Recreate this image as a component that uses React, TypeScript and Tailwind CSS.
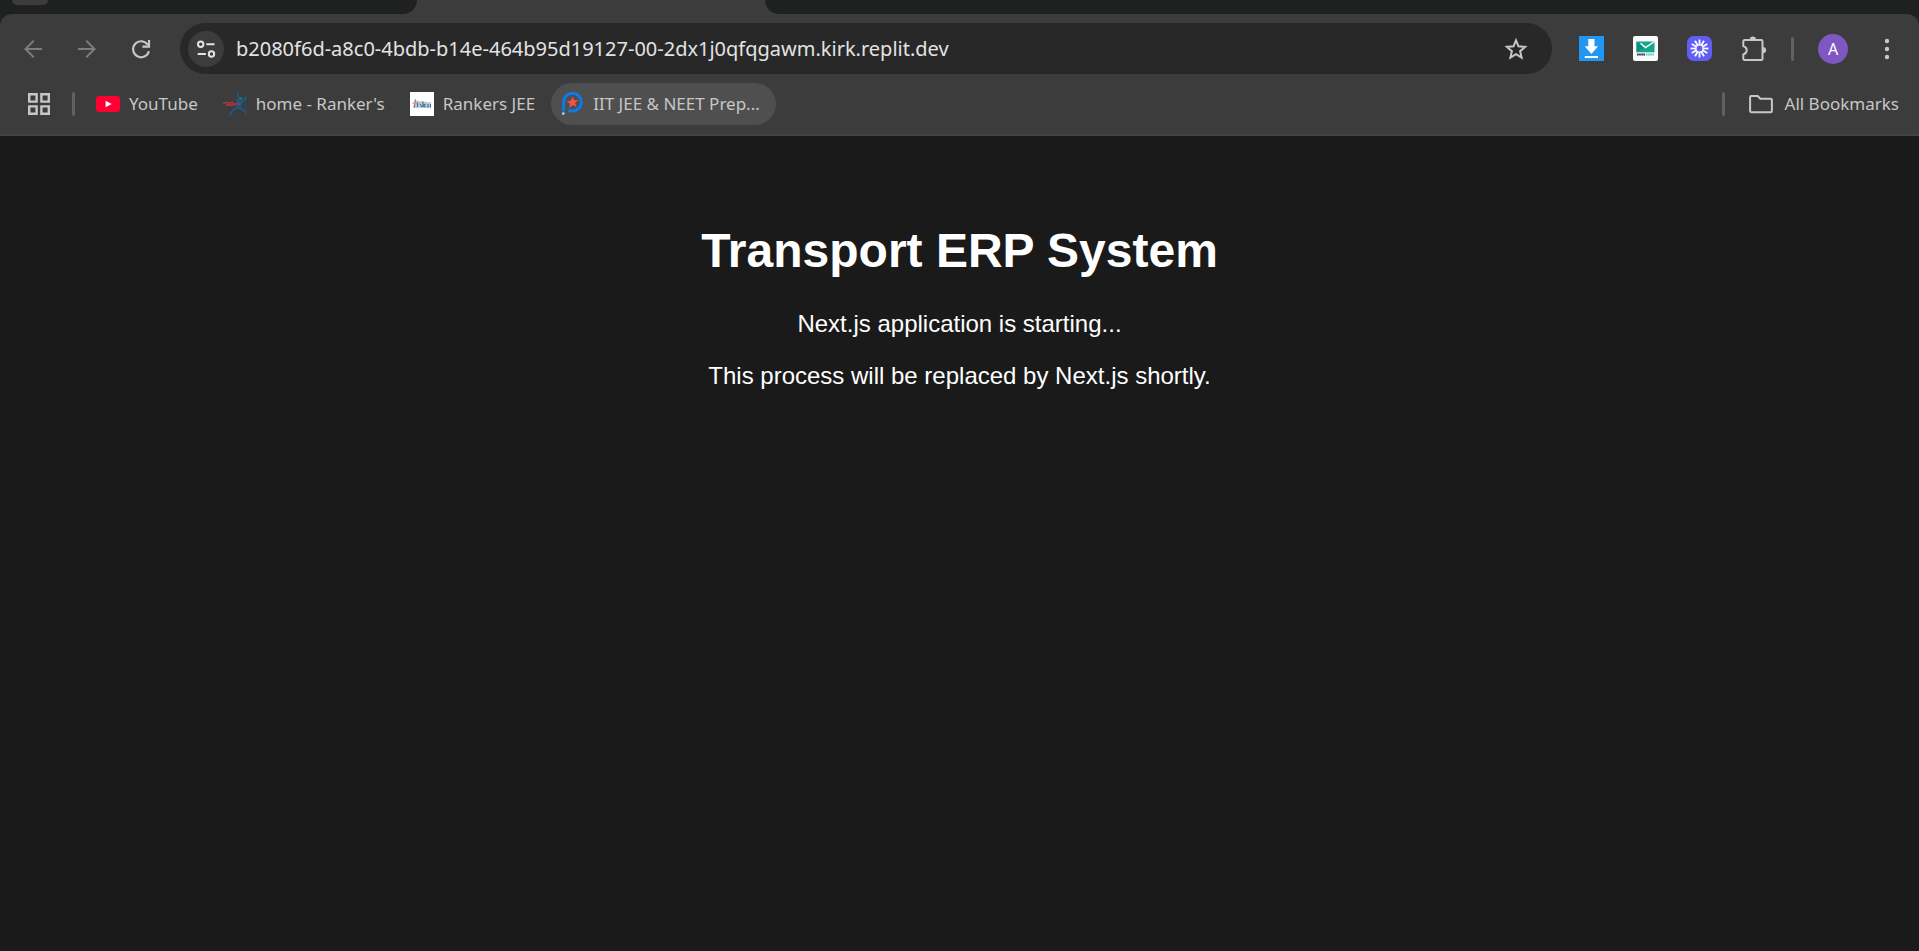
import type { ReactNode } from "react";

function ArrowIcon({ flip = false }: { flip?: boolean }) {
  return (
    <svg viewBox="0 0 18 18" className={flip ? "size-[18px] rotate-180" : "size-[18px]"} fill="none" stroke="currentColor" strokeWidth="2" aria-hidden="true">
      <path d="M18 9H1.6M9.7 0.8L1.5 9l8.2 8.2" />
    </svg>
  );
}

function ReloadIcon() {
  return (
    <svg viewBox="0 0 20 20" className="size-5" fill="none" stroke="currentColor" strokeWidth="2.2" aria-hidden="true">
      <path d="M17.9 12.2A8 8 0 1 1 16.8 5.8" />
      <path d="M18 1v6.6h-6.6" />
    </svg>
  );
}

function TuneIcon() {
  return (
    <svg viewBox="0 0 20 20" className="size-5" fill="none" stroke="currentColor" strokeWidth="2" aria-hidden="true">
      <circle cx="4.7" cy="5.2" r="2.7" />
      <path d="M10.3 5.2h8.2M1.7 15h8.2" />
      <circle cx="15.5" cy="15" r="2.7" />
    </svg>
  );
}

function StarIcon() {
  return (
    <svg viewBox="0 0 24 24" className="size-6" fill="none" stroke="currentColor" strokeWidth="2" aria-hidden="true">
      <path d="M12 3.3l2.500 6 6.600.6-5 4.300 1.500 6.400-5.600-3.400-5.600 3.400 1.500-6.400-5-4.300 6.600-.6z" />
    </svg>
  );
}

function DownloadExtension() {
  return (
    <svg viewBox="0 0 25 25" className="size-[25px]" aria-hidden="true">
      <path fill="#2196f3" d="M0 0h25v25H0z" />
      <path fill="#fff" d="M9.300 3h6.200v7.200h3.600L12.400 18 5.700 10.200h3.600zM5.800 20h13.200v2H5.800z" />
    </svg>
  );
}

function MailExtension() {
  return (
    <svg viewBox="0 0 25 25" className="size-[25px]" aria-hidden="true">
      <rect width="25" height="25" rx="2" fill="#fafafa" />
      <path fill="#16a58c" d="M3.500 5.500h18v10.800h-18z" />
      <path fill="#0f8f7d" d="M3.500 5.500l8 6.500-8 4.300z" />
      <path d="M7.500 7.200l5 4.300 9-6" fill="none" stroke="#fff" strokeWidth="1.400" />
      <path d="M4 18.400h8.300" stroke="#26384d" strokeWidth="2" strokeDasharray="1.700 .4" />
      <path d="M13 18.400h8" stroke="#54d5b2" strokeWidth="2" strokeDasharray="1.700 .4" />
    </svg>
  );
}

function BurstExtension() {
  const angles = [0, 30, 60, 90, 120, 150, 180, 210, 240, 270, 300, 330];
  return (
    <svg viewBox="0 0 25 25" className="size-[25px]" aria-hidden="true">
      <rect width="25" height="25" rx="6.500" fill="#625df5" />
      {angles.map((angle) => (
        <path key={angle} d="M12.500 3.500v5.500" stroke="#fff" strokeWidth="1.800" transform={`rotate(${angle} 12.5 12.5)`} />
      ))}
      <circle cx="12.500" cy="12.500" r="3.500" fill="none" stroke="#fff" strokeWidth="1.200" />
    </svg>
  );
}

function PuzzleIcon() {
  return (
    <svg viewBox="0 0 28 28" className="size-7" aria-hidden="true">
      <path d="M5.500 5h16.800a1.200 1.200 0 0 1 1.200 1.200v17.600a1.200 1.200 0 0 1-1.200 1.200H5.500a1.200 1.200 0 0 1-1.200-1.200v-4.300c2.200-.6 3.400-2.200 3.400-4.200s-1.200-3.600-3.400-4.200V6.200A1.200 1.200 0 0 1 5.500 5z" fill="none" stroke="currentColor" strokeWidth="2" />
      <path fill="currentColor" d="M10.800 4.500a3.100 3.100 0 0 1 6.200 0zM23.900 11.900a3.200 3.200 0 0 1 0 6.400z" />
    </svg>
  );
}

function DotsIcon() {
  return (
    <svg viewBox="0 0 6 22" className="h-[22px] w-1.5" fill="currentColor" aria-hidden="true">
      <circle cx="3" cy="3" r="2.200" />
      <circle cx="3" cy="11" r="2.200" />
      <circle cx="3" cy="19" r="2.200" />
    </svg>
  );
}

function AppsIcon() {
  return (
    <svg viewBox="0 0 22 22" className="size-[22px]" fill="none" stroke="currentColor" strokeWidth="2.400" aria-hidden="true">
      <path d="M1.200 1.200h7.400v7.400H1.200zM13.400 1.200h7.400v7.400h-7.400zM1.200 13.400h7.400v7.400H1.200zM13.400 13.400h7.400v7.400h-7.400z" />
    </svg>
  );
}

function YouTubeIcon() {
  return (
    <svg viewBox="0 0 24 24" className="size-6" aria-hidden="true">
      <rect y="4" width="24" height="16" rx="3" fill="#ff0033" />
      <path fill="#fff" d="M9.600 8.800l6.200 3.200-6.200 3.200z" />
    </svg>
  );
}

function RunnerIcon() {
  return (
    <svg viewBox="0 0 24 24" className="size-6" aria-hidden="true">
      <path d="M14.500 1l1.500 6.500M23.500 5l-4.500 5M17 9.500l-2 6.500M15.500 15l-5 2.500L6 23.500M16 15.500l3 2 4 3" fill="none" stroke="#20587c" strokeWidth="2" />
      <path fill="#20587c" d="M13.500 7l7 2-2.500 7-5 1 .5-4z" />
      <path d="M22.800 4v19" stroke="#20587c" strokeWidth=".8" />
      <circle cx="17.800" cy="6.300" r="1.600" fill="#246990" />
      <path d="M0 11.500l4-1.200 2.500 1.200L9 10.300l3 1.700h4.500M3 13h9" fill="none" stroke="#b8304c" strokeWidth="1.300" />
    </svg>
  );
}

function RankersIcon() {
  return (
    <svg viewBox="0 0 24 24" className="size-6" aria-hidden="true">
      <path fill="#fff" d="M0 0h24v24H0z" />
      <path fill="#8da9bf" opacity=".6" d="M5 8.500l16 2v5.500H3.500z" />
      <path d="M5.500 7.500l-1.500 8M7.500 10.500v4.500M10 12l2 3M13 9.500v5.500M15.500 12l-2 1.500 2 1.500M18 12v3.500M20.500 12v3.500" fill="none" stroke="#416f95" strokeWidth="1.100" />
      <path d="M2.500 11.200l5-.6M5 9v4" stroke="#ee8b91" strokeWidth="1.200" />
    </svg>
  );
}

function PrepIcon() {
  return (
    <svg viewBox="0 0 24 24" className="size-6" aria-hidden="true">
      <path d="M3.500 19.500v-9.300a8.900 8.900 0 1 1 5 8" fill="none" stroke="#0a7cf0" strokeWidth="2.800" />
      <circle cx="3.300" cy="21.500" r="1.500" fill="#91c5f3" />
      <path fill="#f4514c" d="M12.500 4.500l1.500 3.800 4-.3-2.900 2.900 1.700 4.100-3.900-2-3.500 2.800.5-4.300L6.500 9.500l4.500-.9z" />
    </svg>
  );
}

function FolderIcon() {
  return (
    <svg viewBox="0 0 24 20" className="h-5 w-6" fill="none" stroke="currentColor" strokeWidth="2" strokeLinejoin="round" aria-hidden="true">
      <path d="M2.300 2h6.400l2.700 2.800h10.300a1.200 1.200 0 0 1 1.200 1.200v11a1.200 1.200 0 0 1-1.200 1.200H2.300A1.200 1.200 0 0 1 1.100 17V3.200A1.200 1.200 0 0 1 2.300 2z" />
    </svg>
  );
}

function IconButton({ label, className = "", children }: { label: string; className?: string; children: ReactNode }) {
  return (
    <button type="button" aria-label={label} className={`flex h-[51px] w-[54px] shrink-0 items-center justify-center ${className}`}>
      {children}
    </button>
  );
}

function Divider() {
  return <span className="h-6 w-[3px] shrink-0 rounded-full bg-[#606060]" />;
}

function Bookmark({ icon, label, active = false }: { icon: ReactNode; label: string; active?: boolean }) {
  return (
    <a href="#" className={`flex h-[42px] items-center gap-[9px] rounded-full pr-4 pl-[9px] whitespace-nowrap ${active ? "bg-[#4f4f4f]" : ""}`}>
      {icon}
      <span>{label}</span>
    </a>
  );
}

function TabStrip() {
  return (
    <div className="flex h-[14px] bg-[#3c3c3c]">
      <div className="w-[417px] rounded-br-[14px] bg-[#1f2120] pl-3">
        <div className="h-[5px] w-9 rounded-b-full bg-[#3c3c3c]" />
      </div>
      <div className="w-[348px]" />
      <div className="flex-1 rounded-bl-[14px] bg-[#1f2120]" />
    </div>
  );
}

export default function App() {
  return (
    <div className="flex min-h-screen flex-col bg-[#1a1a1a] font-['Noto_Sans','Open_Sans',sans-serif]">
      <header className="bg-[#1f2120]">
        <TabStrip />
        <div className="rounded-t-[12px] border-b-2 border-[#444444] bg-[#3c3c3c] pt-[9px] pb-[9px] text-[#c7c7c7]">
          <div className="flex items-center pr-[5px] pl-1.5">
            <IconButton label="Back" className="text-[#7c7c7c]"><ArrowIcon /></IconButton>
            <IconButton label="Forward" className="text-[#7c7c7c]"><ArrowIcon flip /></IconButton>
            <IconButton label="Reload"><ReloadIcon /></IconButton>
            <div className="ml-3 flex h-[51px] min-w-0 flex-1 items-center rounded-full bg-[#282828] pr-[9px] pl-2">
              <button type="button" aria-label="Site information" className="flex size-9 shrink-0 items-center justify-center rounded-full bg-[#3c3c3c] text-[#e3e3e3]">
                <TuneIcon />
              </button>
              <input
                aria-label="Address"
                className="ml-3 h-9 min-w-0 flex-1 bg-transparent text-[20px] text-[#e3e3e3] outline-none"
                defaultValue="b2080f6d-a8c0-4bdb-b14e-464b95d19127-00-2dx1j0qfqgawm.kirk.replit.dev"
              />
              <IconButton label="Bookmark this page"><StarIcon /></IconButton>
            </div>
            <div className="ml-3 flex items-center">
              <IconButton label="Downloader"><DownloadExtension /></IconButton>
              <IconButton label="Temp mail"><MailExtension /></IconButton>
              <IconButton label="Loom"><BurstExtension /></IconButton>
              <IconButton label="Extensions"><PuzzleIcon /></IconButton>
              <span className="mr-0.5 flex w-6 justify-center"><Divider /></span>
              <IconButton label="Profile">
                <span className="flex size-[30px] items-center justify-center rounded-full bg-[#7e57c2] text-[16px] text-white">A</span>
              </IconButton>
              <IconButton label="Menu"><DotsIcon /></IconButton>
            </div>
          </div>
          <nav aria-label="Bookmarks" className="mt-[9px] flex items-center pr-5 pl-7 text-[17px]">
            <button type="button" aria-label="Apps"><AppsIcon /></button>
            <span className="mr-3 ml-[22px] flex"><Divider /></span>
            <Bookmark icon={<YouTubeIcon />} label="YouTube" />
            <Bookmark icon={<RunnerIcon />} label="home - Ranker's" />
            <Bookmark icon={<RankersIcon />} label="Rankers JEE" />
            <Bookmark icon={<PrepIcon />} label="IIT JEE & NEET Prep..." active />
            <span className="mr-6 ml-auto flex"><Divider /></span>
            <button type="button" className="flex items-center gap-3 whitespace-nowrap">
              <FolderIcon />
              All Bookmarks
            </button>
          </nav>
        </div>
      </header>
      <main className="flex-1 px-6 pt-[87px] text-center font-['Liberation_Sans',Arial,sans-serif] text-2xl leading-7 text-white">
        <h1 className="text-5xl leading-[56px] font-bold">Transport ERP System</h1>
        <p className="mt-[31px]">Next.js application is starting...</p>
        <p className="mt-6">This process will be replaced by Next.js shortly.</p>
      </main>
    </div>
  );
}
